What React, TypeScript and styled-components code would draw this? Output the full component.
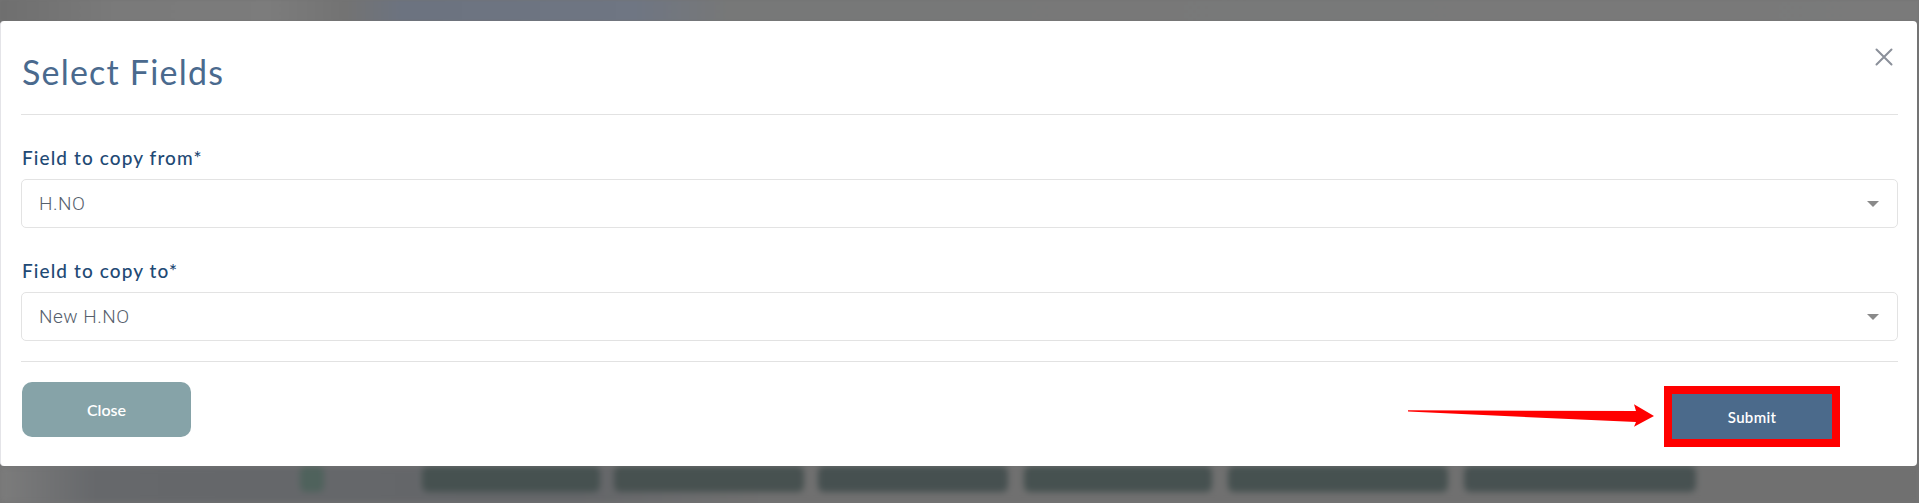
import React from "react";
import styled, { createGlobalStyle } from "styled-components";

const GlobalStyle = createGlobalStyle`
  html, body {
    margin: 0;
    padding: 0;
    background: #747474;
    font-family: "Lato", "Liberation Sans", sans-serif;
  }
  * { box-sizing: border-box; }
`;

const Page = styled.div`
  width: 1919px;
  height: 503px;
  overflow: hidden;
  display: flex;
  flex-direction: column;
  background: #747474;
`;

const TopBackdrop = styled.div`
  height: 21px;
  flex: none;
  background: linear-gradient(
    to right,
    #6f6f6f 0%,
    #7a7a7a 6%,
    #7c7c7c 14%,
    #737373 18%,
    #6c7380 21%,
    #6f7683 33%,
    #777878 38%,
    #7a7a7a 100%
  );
  filter: blur(1px);
`;

const Modal = styled.div`
  width: 1917px;
  height: 445px;
  flex: none;
  background: #ffffff;
  border-radius: 4px;
  border-left: 1px solid #e4e4e8;
  padding: 0 19px 0 20px;
  display: flex;
  flex-direction: column;
  position: relative;
  z-index: 1;
`;

const Header = styled.div`
  height: 94px;
  flex: none;
  display: flex;
  justify-content: space-between;
  align-items: flex-start;
  border-bottom: 1px solid #e2e2e2;
`;

const Title = styled.h2`
  margin: 31px 0 0 1px;
  font-family: "Lato", "Liberation Sans", sans-serif;
  font-weight: 400;
  font-size: 34px;
  line-height: 1.2;
  letter-spacing: 1.2px;
  color: #4a6a8e;
`;

const CloseX = styled.button`
  margin: 27px 5px 0 0;
  padding: 0;
  width: 18px;
  height: 18px;
  border: none;
  background: transparent;
  display: flex;
  cursor: pointer;
`;

const Body = styled.div`
  padding: 31px 0 20px;
  border-bottom: 1px solid #e2e2e2;
  display: flex;
  flex-direction: column;
  gap: 31px;
`;

const Field = styled.div`
  display: flex;
  flex-direction: column;
  gap: 9px;
`;

const Label = styled.label`
  font-family: "Lato", "Liberation Sans", sans-serif;
  font-weight: 500;
  font-size: 19px;
  line-height: 24px;
  letter-spacing: 1.1px;
  color: #1f4a75;
  padding-left: 1px;
`;

const SelectBox = styled.div`
  height: 49px;
  border: 1px solid #e3e3e3;
  border-radius: 5px;
  padding: 0 18px 0 17px;
  display: flex;
  align-items: center;
  justify-content: space-between;
  background: #fff;
`;

const SelectValue = styled.span`
  font-family: "Roboto", "Liberation Sans", sans-serif;
  font-weight: 300;
  font-size: 19px;
  letter-spacing: 0.5px;
  color: #56606c;
`;

const Caret = styled.span`
  width: 0;
  height: 0;
  border-left: 6px solid transparent;
  border-right: 6px solid transparent;
  border-top: 6px solid #8a8a8a;
`;

const Footer = styled.div`
  flex: 1;
  display: flex;
  align-items: flex-start;
  padding-top: 20px;
`;

const CloseButton = styled.button`
  width: 169px;
  height: 55px;
  margin-left: 1px;
  border: none;
  border-radius: 10px;
  background: #86a3a8;
  color: #ffffff;
  font-family: "Lato", "Liberation Sans", sans-serif;
  font-weight: 600;
  font-size: 16px;
  cursor: pointer;
`;

const Spacer = styled.div`
  flex: 1;
`;

const Arrow = styled.svg`
  margin-top: 22px;
  margin-right: 10px;
  flex: none;
`;

const Highlight = styled.div`
  margin-top: 4px;
  margin-right: 58px;
  border: 8px solid #ff0000;
  display: flex;
`;

const SubmitButton = styled.button`
  width: 160px;
  height: 45px;
  border: none;
  border-radius: 0;
  background: #4b6a8b;
  color: #ffffff;
  font-family: "Lato", "Liberation Sans", sans-serif;
  font-weight: 600;
  font-size: 15px;
  letter-spacing: 0.3px;
  cursor: pointer;
`;

const BottomBackdrop = styled.div`
  flex: 1;
  display: flex;
  align-items: flex-start;
  background: linear-gradient(
    to right,
    #7c7c7c 0%,
    #66686b 5%,
    #646669 30%,
    #707070 40%,
    #707070 100%
  );
  filter: blur(3px);
  overflow: hidden;
`;

const Blob = styled.div<{ $w: number; $ml: number; $c: string }>`
  flex: none;
  width: ${(p) => p.$w}px;
  margin-left: ${(p) => p.$ml}px;
  height: 26px;
  border-radius: 6px;
  background: ${(p) => p.$c};
`;

const blobs = [
  { w: 24, ml: 300, c: "#4f625c" },
  { w: 178, ml: 98, c: "#465150" },
  { w: 190, ml: 14, c: "#475150" },
  { w: 190, ml: 14, c: "#465050" },
  { w: 188, ml: 16, c: "#465150" },
  { w: 220, ml: 16, c: "#465150" },
  { w: 232, ml: 16, c: "#475151" },
];

export default function App() {
  return (
    <>
      <GlobalStyle />
      <Page>
        <TopBackdrop />
        <Modal>
          <Header>
            <Title>Select Fields</Title>
            <CloseX aria-label="close">
              <svg width="18" height="18" viewBox="0 0 18 18">
                <path
                  d="M1.5 1.5 L16.5 16.5 M16.5 1.5 L1.5 16.5"
                  stroke="#8b909a"
                  strokeWidth="2"
                  strokeLinecap="round"
                />
              </svg>
            </CloseX>
          </Header>
          <Body>
            <Field>
              <Label>Field to copy from*</Label>
              <SelectBox>
                <SelectValue>H.NO</SelectValue>
                <Caret />
              </SelectBox>
            </Field>
            <Field>
              <Label>Field to copy to*</Label>
              <SelectBox>
                <SelectValue>New H.NO</SelectValue>
                <Caret />
              </SelectBox>
            </Field>
          </Body>
          <Footer>
            <CloseButton>Close</CloseButton>
            <Spacer />
            <Arrow width="246" height="23" viewBox="0 0 246 23">
              <polygon
                points="0,6.3 228,7 226,0.3 246,12 226,22.7 228,18 0,7.6"
                fill="#ff0000"
              />
            </Arrow>
            <Highlight>
              <SubmitButton>Submit</SubmitButton>
            </Highlight>
          </Footer>
        </Modal>
        <BottomBackdrop>
          {blobs.map((b, i) => (
            <Blob key={i} $w={b.w} $ml={b.ml} $c={b.c} />
          ))}
        </BottomBackdrop>
      </Page>
    </>
  );
}
